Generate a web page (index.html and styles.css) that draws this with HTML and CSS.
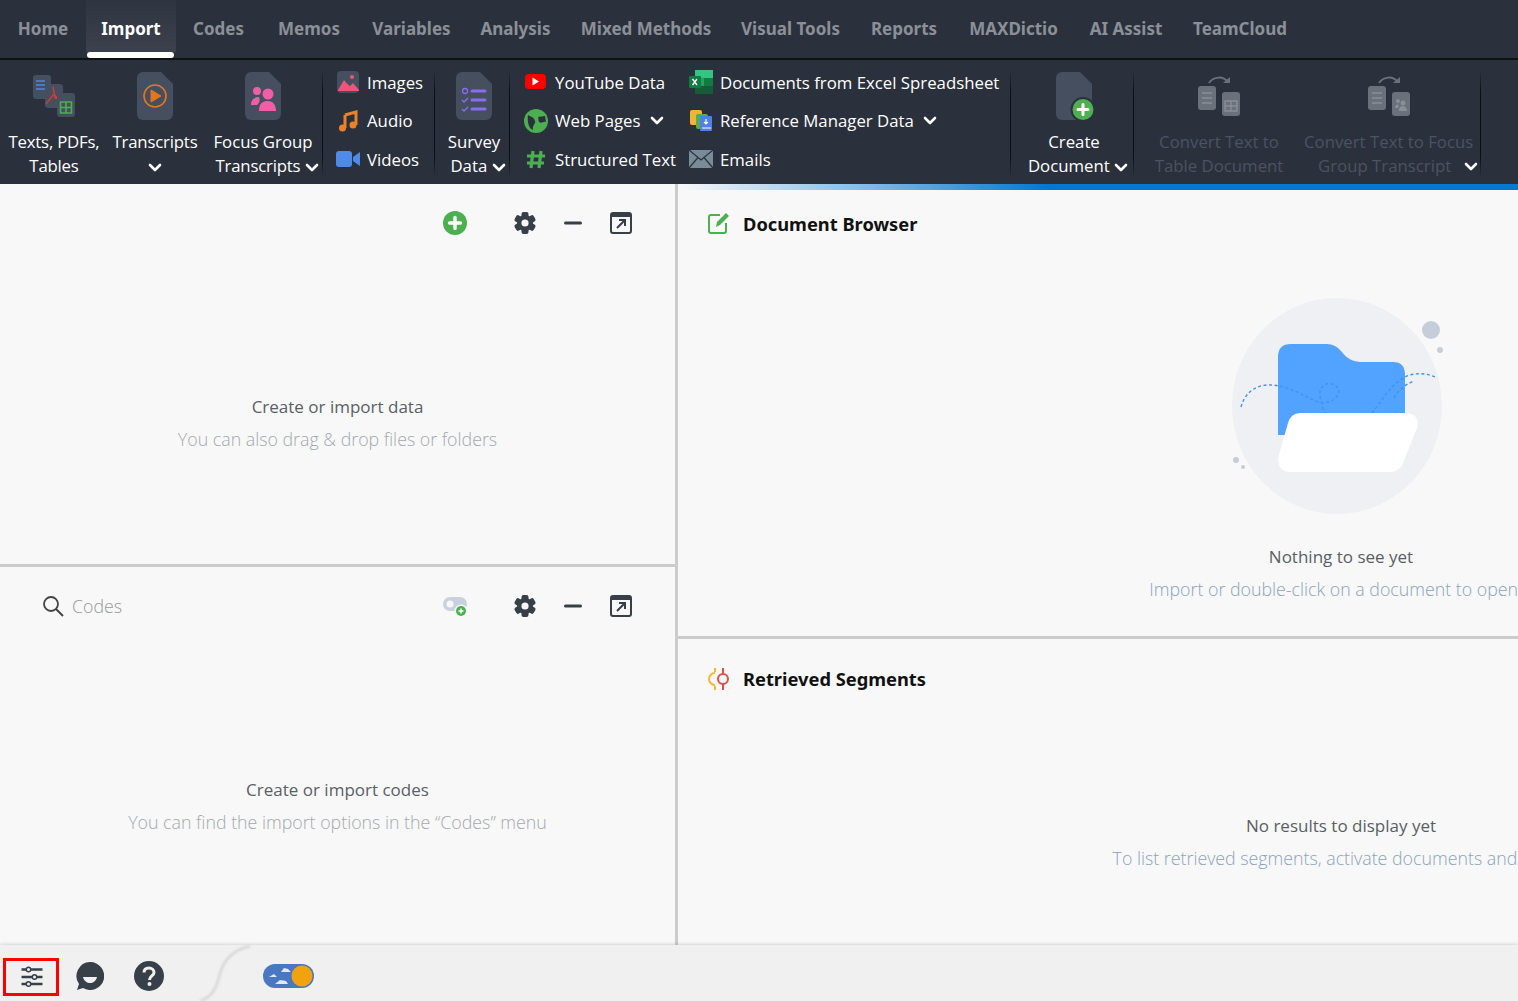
FILE: index.html
```html
<!DOCTYPE html>
<html lang="en">
<head>
    <meta charset="UTF-8">
    <title>Import</title>
    <link rel="stylesheet" href="styles.css">
</head>
<body>
    <svg class="defs" width="0" height="0">
        <symbol id="doc" viewBox="0 0 36 48"><path d="M6 0H24L36 12V42A6 6 0 0 1 30 48H6A6 6 0 0 1 0 42V6A6 6 0 0 1 6 0Z"/></symbol>
        <symbol id="chev" viewBox="0 0 14 9"><path d="M2 2L7 7L12 2" fill="none" stroke="currentColor" stroke-width="2.6" stroke-linecap="round" stroke-linejoin="round"/></symbol>
        <symbol id="gear" viewBox="0 0 24 24">
            <g fill="#373f49">
                <rect x="8.5" y="1" width="7" height="22" rx="2"/>
                <rect x="8.5" y="1" width="7" height="22" rx="2" transform="rotate(60 12 12)"/>
                <rect x="8.5" y="1" width="7" height="22" rx="2" transform="rotate(120 12 12)"/>
                <circle cx="12" cy="12" r="8"/>
            </g>
            <circle cx="12" cy="12" r="3.6" fill="#f8f8f8"/>
        </symbol>
        <symbol id="minus" viewBox="0 0 24 24"><rect x="3" y="10.5" width="18" height="3" rx="1.5" fill="#373f49"/></symbol>
        <symbol id="popout" viewBox="0 0 24 24">
            <rect x="2" y="2" width="20" height="20" rx="2" fill="none" stroke="#373f49" stroke-width="2"/>
            <rect x="2" y="2" width="20" height="4" fill="#373f49"/>
            <path d="M8 17L16 9M10 9H16V15" fill="none" stroke="#373f49" stroke-width="2"/>
        </symbol>
    </svg>

    <div class="app">
        <!-- tabs -->
        <nav class="tabs">
            <a class="tab t-home">Home</a>
            <a class="tab t-import active">Import</a>
            <a class="tab t-codes">Codes</a>
            <a class="tab t-memos">Memos</a>
            <a class="tab t-variables">Variables</a>
            <a class="tab t-analysis">Analysis</a>
            <a class="tab t-mixed">Mixed Methods</a>
            <a class="tab t-visual">Visual Tools</a>
            <a class="tab t-reports">Reports</a>
            <a class="tab t-maxdictio">MAXDictio</a>
            <a class="tab t-ai">AI Assist</a>
            <a class="tab t-cloud">TeamCloud</a>
        </nav>

        <!-- ribbon -->
        <div class="ribbon">
            <div class="big w-texts">
                <svg class="big-icon" width="44" height="44" viewBox="0 0 44 44">
                    <rect x="1" y="1" width="18" height="24" rx="3" fill="#454f60"/>
                    <path d="M4 7H13M4 11H13M4 15H13" stroke="#4f86e0" stroke-width="1.3"/>
                    <rect x="13" y="10" width="18" height="24" rx="3" fill="#454f60"/>
                    <path d="M21 13L23 24L30 26M14 30L22 20L27 27" fill="none" stroke="#d93a32" stroke-width="1.4"/>
                    <rect x="25" y="19" width="18" height="24" rx="3" fill="#454f60"/>
                    <path d="M28.5 28H39.5V39H28.5ZM28.5 33.500H39.500M34 28V39" fill="none" stroke="#4caf50" stroke-width="1.6"/>
                </svg>
                <div class="big-label tight">Texts, PDFs,<br>Tables</div>
            </div>
            <div class="big w-trans">
                <svg class="big-icon" width="36" height="48" viewBox="0 0 36 48">
                    <use href="#doc" width="36" height="48" fill="#454f60"/>
                    <circle cx="18" cy="24" r="11" fill="none" stroke="#e8751a" stroke-width="1.6"/>
                    <path d="M14 18L24 24L14 30Z" fill="#e8751a" stroke="#e8751a" stroke-linejoin="round"/>
                </svg>
                <div class="big-label tight">Transcripts<br><svg class="chev" width="14" height="9"><use href="#chev"/></svg></div>
            </div>
            <div class="big w-focus">
                <svg class="big-icon" width="36" height="48" viewBox="0 0 36 48">
                    <use href="#doc" width="36" height="48" fill="#454f60"/>
                    <g fill="#ee5fa7">
                        <circle cx="12" cy="19" r="4"/>
                        <circle cx="23" cy="22" r="5.500"/>
                        <path d="M6 33C6 27 10 25 14 25C15 28 15 30 12 33Z"/>
                        <path d="M14 39C14 31 18 29 23 29C28 29 31 33 31 39Z"/>
                    </g>
                </svg>
                <div class="big-label">Focus Group<br><span class="ln tight">Transcripts <svg class="chev" width="14" height="9"><use href="#chev"/></svg></span></div>
            </div>
            <div class="sep"></div>
            <div class="small-col w-media">
                <div class="small">
                    <svg class="small-icon" width="24" height="24" viewBox="0 0 24 24">
                        <rect x="1" y="1" width="22" height="22" rx="4" fill="#454f60"/>
                        <path d="M2 20L8 10C10 12 12 15 14 16L17 13L23 20V21H2Z" fill="#ee5577"/>
                        <circle cx="16" cy="7" r="2" fill="#ee5577"/>
                    </svg>Images
                </div>
                <div class="small">
                    <svg class="small-icon" width="24" height="24" viewBox="0 0 24 24">
                        <path d="M9 6L20 3V16" fill="none" stroke="#e8832a" stroke-width="3"/>
                        <path d="M9 6V19" stroke="#e8832a" stroke-width="3"/>
                        <circle cx="6.500" cy="19" r="3.500" fill="#e8832a"/>
                        <circle cx="17" cy="16" r="3.500" fill="#e8832a"/>
                    </svg>Audio
                </div>
                <div class="small">
                    <svg class="small-icon" width="24" height="24" viewBox="0 0 24 24">
                        <rect x="0" y="4" width="16" height="16" rx="3" fill="#4f8ae8"/>
                        <path d="M17 10L24 5V19L17 14Z" fill="#4f8ae8"/>
                    </svg>Videos
                </div>
            </div>
            <div class="sep"></div>
            <div class="big w-survey">
                <svg class="big-icon" width="36" height="48" viewBox="0 0 36 48">
                    <use href="#doc" width="36" height="48" fill="#454f60"/>
                    <circle cx="9" cy="19" r="2.500" fill="none" stroke="#8a6cf0" stroke-width="1.300"/>
                    <path d="M6 28L8 30L12 26M6 37L8 39L12 35" fill="none" stroke="#8a6cf0" stroke-width="1.300"/>
                    <path d="M16 19H29M16 28H29M16 37H29" stroke="#8a6cf0" stroke-width="3" stroke-linecap="round"/>
                </svg>
                <div class="big-label">Survey<br><span class="ln">Data <svg class="chev" width="14" height="9"><use href="#chev"/></svg></span></div>
            </div>
            <div class="sep"></div>
            <div class="small-col w-web">
                <div class="small">
                    <svg class="small-icon" width="24" height="24" viewBox="0 0 24 24">
                        <rect x="1" y="4" width="21" height="15" rx="4" fill="#f00"/>
                        <path d="M8.500 7.500L15 11.500L8.500 15.500Z" fill="#fff"/>
                    </svg>YouTube Data
                </div>
                <div class="small">
                    <svg class="small-icon" width="24" height="24" viewBox="0 0 24 24">
                        <circle cx="12" cy="12" r="12" fill="#4caf50"/>
                        <path d="M4 6C7 8 10 8 11 12C12 15 8 16 9 21C5 20 3 13 4 6ZM14 8L21 7L22 13C19 12 18 15 15 13C14 12 15 10 14 8Z" fill="#2b313c"/>
                    </svg>Web Pages <svg class="chev" width="14" height="9"><use href="#chev"/></svg>
                </div>
                <div class="small">
                    <svg class="small-icon" width="24" height="24" viewBox="0 0 24 24">
                        <path d="M9 4L7 21M17 4L15 21M3 9H21M3 16H20" fill="none" stroke="#4caf50" stroke-width="3.200"/>
                    </svg>Structured Text
                </div>
            </div>
            <div class="small-col w-docs">
                <div class="small">
                    <svg class="small-icon" width="24" height="24" viewBox="0 0 24 24">
                        <rect x="6" y="0" width="18" height="8" fill="#33c481"/>
                        <rect x="6" y="8" width="9" height="8" fill="#21a366"/>
                        <rect x="15" y="8" width="9" height="8" fill="#107c41"/>
                        <rect x="6" y="16" width="18" height="8" fill="#185c37"/>
                        <rect x="0" y="6" width="12" height="12" rx="1" fill="#107c41"/>
                        <path d="M3.500 9L8 15M8 9L3.500 15" stroke="#fff" stroke-width="1.400"/>
                    </svg>Documents from Excel Spreadsheet
                </div>
                <div class="small">
                    <svg class="small-icon" width="24" height="24" viewBox="0 0 24 24">
                        <rect x="1" y="1" width="12" height="15" rx="2" fill="#f5b041"/>
                        <rect x="7" y="5" width="12" height="15" rx="2" fill="#4caf50"/>
                        <rect x="11" y="7" width="12" height="15" rx="1" fill="#4f7fe8"/>
                        <path d="M17 10V15M15 13L17 15L19 13M13 19H22" fill="none" stroke="#fff" stroke-width="1.200"/>
                    </svg>Reference Manager Data <svg class="chev" width="14" height="9"><use href="#chev"/></svg>
                </div>
                <div class="small">
                    <svg class="small-icon" width="24" height="24" viewBox="0 0 24 24">
                        <rect x="0" y="3" width="24" height="18" rx="1" fill="#788b96"/>
                        <path d="M0 3L12 13L24 3M0 21L9 10.500M24 21L15 10.500" fill="none" stroke="#2b313c" stroke-width="1.200"/>
                    </svg>Emails
                </div>
            </div>
            <div class="sep"></div>
            <div class="big w-create">
                <svg class="big-icon create-icon" width="40" height="50" viewBox="0 0 40 50">
                    <use href="#doc" width="36" height="48" fill="#454f60"/>
                    <circle cx="27" cy="37.500" r="12.500" fill="#2b313c"/>
                    <circle cx="27" cy="37.500" r="10.500" fill="#4caf50"/>
                    <path d="M27 32.500V42.500M22 37.500H32" stroke="#fff" stroke-width="3" stroke-linecap="round"/>
                </svg>
                <div class="big-label">Create<br><span class="ln">Document <svg class="chev" width="14" height="9"><use href="#chev"/></svg></span></div>
            </div>
            <div class="sep"></div>
            <div class="big w-conv1 disabled">
                <svg class="conv-icon" width="44" height="44" viewBox="0 0 44 44">
                    <path d="M12 7C17 0 26 0 31 6" fill="none" stroke="#6b717b" stroke-width="2"/>
                    <path d="M26 7H33V1Z" fill="#6b717b"/>
                    <rect x="1" y="10" width="18" height="24" rx="3" fill="#6b717b"/>
                    <path d="M5 17H15M5 22H15M5 27H15" stroke="#8a8f97" stroke-width="1.300"/>
                    <rect x="25" y="16" width="18" height="24" rx="3" fill="#6b717b"/>
                    <path d="M28 25H40V35H28ZM28 30H40M34 25V35" fill="none" stroke="#8a8f97" stroke-width="1.300"/>
                </svg>
                <div class="big-label">Convert Text to<br>Table Document</div>
            </div>
            <div class="big w-conv2 disabled">
                <svg class="conv-icon" width="44" height="44" viewBox="0 0 44 44">
                    <path d="M12 7C17 0 26 0 31 6" fill="none" stroke="#6b717b" stroke-width="2"/>
                    <path d="M26 7H33V1Z" fill="#6b717b"/>
                    <rect x="1" y="10" width="18" height="24" rx="3" fill="#6b717b"/>
                    <path d="M5 17H15M5 22H15M5 27H15" stroke="#8a8f97" stroke-width="1.300"/>
                    <rect x="25" y="16" width="18" height="24" rx="3" fill="#6b717b"/>
                    <circle cx="31" cy="25" r="2" fill="#8a8f97"/>
                    <circle cx="36" cy="27" r="2.500" fill="#8a8f97"/>
                    <path d="M28 32C28 29 30 28 32 29L31 32ZM32 35C32 31 34 30 36 30C38 30 40 32 40 35Z" fill="#8a8f97"/>
                </svg>
                <div class="big-label">Convert Text to Focus</div>
                <div class="big-label conv-last"><span>Group Transcript</span><svg class="chev" width="14" height="9"><use href="#chev"/></svg></div>
            </div>
            <div class="sep"></div>
        </div>

        <div class="main">
            <!-- left column -->
            <div class="left">
                <section class="pane pane-top">
                    <div class="toolbar">
                        <svg class="tool add" width="24" height="24" viewBox="0 0 24 24">
                            <circle cx="12" cy="12" r="12" fill="#4caf50"/>
                            <path d="M12 6.500V17.500M6.500 12H17.500" stroke="#fff" stroke-width="3.400" stroke-linecap="round"/>
                        </svg>
                        <svg class="tool" width="24" height="24"><use href="#gear"/></svg>
                        <svg class="tool" width="24" height="24"><use href="#minus"/></svg>
                        <svg class="tool" width="24" height="24"><use href="#popout"/></svg>
                    </div>
                    <div class="message">
                        <p class="msg-title">Create or import data</p>
                        <p class="msg-sub">You can also drag &amp; drop files or folders</p>
                    </div>
                </section>
                <section class="pane">
                    <div class="toolbar">
                        <div class="search">
                            <svg width="22" height="22" viewBox="0 0 22 22">
                                <circle cx="9" cy="9" r="7" fill="none" stroke="#444" stroke-width="1.800"/>
                                <path d="M14 14L21 21" stroke="#444" stroke-width="2"/>
                            </svg>
                            <span>Codes</span>
                        </div>
                        <svg class="tool add" width="24" height="24" viewBox="0 0 24 24">
                            <rect x="0" y="3" width="24" height="14" rx="7" fill="#c9d1de"/>
                            <circle cx="7" cy="10" r="3.500" fill="#f8f8f8"/>
                            <circle cx="18" cy="17" r="6.500" fill="#f8f8f8"/>
                            <circle cx="18" cy="17" r="5" fill="#4caf50"/>
                            <path d="M18 14.500V19.500M15.500 17H20.500" stroke="#fff" stroke-width="1.500"/>
                        </svg>
                        <svg class="tool" width="24" height="24"><use href="#gear"/></svg>
                        <svg class="tool" width="24" height="24"><use href="#minus"/></svg>
                        <svg class="tool" width="24" height="24"><use href="#popout"/></svg>
                    </div>
                    <div class="message">
                        <p class="msg-title">Create or import codes</p>
                        <p class="msg-sub">You can find the import options in the “Codes” menu</p>
                    </div>
                </section>
            </div>

            <!-- right column, wider than the window -->
            <div class="right">
                <div class="progress"></div>
                <section class="doc-browser">
                    <h3 class="pane-title">
                        <svg width="22" height="22" viewBox="0 0 22 22">
                            <path d="M12 3H3A2 2 0 0 0 1 5V19A2 2 0 0 0 3 21H16A2 2 0 0 0 18 19V11" fill="none" stroke="#4caf50" stroke-width="2"/>
                            <path d="M8 15L9 10L18 1L21 4L12 13Z" fill="#4caf50"/>
                        </svg>
                        Document Browser
                    </h3>
                    <svg class="empty-art" width="250" height="240" viewBox="0 0 250 240">
                        <ellipse cx="127" cy="121" rx="105" ry="108" fill="#eef0f4"/>
                        <circle cx="221" cy="45" r="9" fill="#c5cddb"/>
                        <circle cx="230" cy="65" r="3" fill="#c5cddb"/>
                        <circle cx="26" cy="175" r="3" fill="#c5cddb"/>
                        <circle cx="33" cy="182" r="2" fill="#c5cddb"/>
                        <path d="M68 72Q68 59 81 59H117Q125 59 131 66Q139 77 150 77H183Q195 77 195 90V150H68Z" fill="#52a3ff"/>
                        <g fill="none" stroke="#3d93f0" stroke-width="1.400" stroke-dasharray="3 2.500">
                            <path d="M31 122C36 104 50 99 62 100C82 102 95 112 108 117C120 120 132 112 128 103C122 95 108 98 110 112C111 118 113 123 115 128"/>
                            <path d="M162 128C172 116 180 100 195 92C205 87 218 88 227 93"/>
                            <path d="M184 113C188 106 194 100 204 96"/>
                        </g>
                        <path d="M90 128H195Q210 128 207 143L193 178Q190 187 180 187H80Q68 187 68 173L78 138Q81 128 90 128Z" fill="#fff"/>
                    </svg>
                    <div class="message art-msg">
                        <p class="msg-title">Nothing to see yet</p>
                        <p class="msg-sub blue">Import or double-click on a document to open it</p>
                    </div>
                </section>
                <section class="retrieved">
                    <h3 class="pane-title">
                        <svg width="22" height="24" viewBox="0 0 22 24">
                            <path d="M7 1V5M7 19V23" stroke="#f7b733" stroke-width="2"/>
                            <path d="M7 6A6 6 0 0 0 7 18" fill="none" stroke="#f7b733" stroke-width="2"/>
                            <circle cx="15" cy="12" r="5" fill="none" stroke="#e0504a" stroke-width="2"/>
                            <path d="M15 1V7M15 17V23" stroke="#e0504a" stroke-width="2"/>
                        </svg>
                        Retrieved Segments
                    </h3>
                    <div class="message seg-msg">
                        <p class="msg-title">No results to display yet</p>
                        <p class="msg-sub blue">To list retrieved segments, activate documents and codes</p>
                    </div>
                </section>
            </div>
        </div>

        <!-- status bar -->
        <footer class="statusbar">
            <svg class="curve" width="60" height="56" viewBox="0 0 60 56">
                <path d="M2 56C14 52 18 44 21 32C24 20 30 6 52 1" fill="none" stroke="#d6d6d6" stroke-width="2.500"/>
            </svg>
            <div class="settings">
                <svg width="24" height="24" viewBox="0 0 24 24">
                    <path d="M1.500 4.500H22.500M1.500 12H22.500M1.500 19H22.500" stroke="#373f49" stroke-width="2.600"/>
                    <circle cx="8.500" cy="4.500" r="2.200" fill="#f0f0f0" stroke="#373f49" stroke-width="1.400"/>
                    <circle cx="14.500" cy="12" r="2.200" fill="#f0f0f0" stroke="#373f49" stroke-width="1.400"/>
                    <circle cx="8.500" cy="19" r="2.200" fill="#f0f0f0" stroke="#373f49" stroke-width="1.400"/>
                </svg>
            </div>
            <svg class="foot-icon chat" width="28" height="28" viewBox="0 0 28 28">
                <path d="M14 0A14 14 0 1 1 7 26L1 28L3 22A14 14 0 0 1 14 0Z" fill="#373f49"/>
                <path d="M7 15H21C20 19 17 21 14 21C11 21 8 19 7 15Z" fill="#f0f0f0"/>
            </svg>
            <svg class="foot-icon help" width="30" height="30" viewBox="0 0 30 30">
                <circle cx="15" cy="15" r="15" fill="#373f49"/>
                <path d="M10 11.500C10 8.500 12 7 15 7C18 7 20 9 20 11.500C20 15 15.500 15 15.500 19" fill="none" stroke="#f0f0f0" stroke-width="3"/>
                <circle cx="15.500" cy="23" r="2" fill="#f0f0f0"/>
            </svg>
            <svg class="foot-icon toggle" width="51" height="24" viewBox="0 0 51 24">
                <rect x="0" y="0" width="51" height="24" rx="12" fill="#4a78c0"/>
                <path d="M18 8L21 4L25 5L28 8ZM6 13L11 10L14 13ZM12 20L17 16L23 17L25 20Z" fill="#dfe8f5"/>
                <circle cx="39" cy="12" r="10.500" fill="#f2a20e"/>
            </svg>
        </footer>
    </div>
</body>
</html>
```

FILE: styles.css
```css
* {
    box-sizing: border-box;
}
html, body {
    margin: 0;
    height: 100%;
    overflow: hidden;
}
body {
    font-family: "Open Sans", "Noto Sans", sans-serif;
    background-color: #f8f8f8;
}
p, h3 {
    margin: 0;
}
.defs {
    position: absolute;
}
.app {
    height: 1001px;
    display: flex;
    flex-direction: column;
}

/* tabs */
.tabs {
    height: 60px;
    display: flex;
    background-color: #2b313c;
    border-bottom: 2px solid #111;
}
.tab {
    height: 58px;
    display: flex;
    align-items: center;
    justify-content: center;
    padding-bottom: 2px;
    font-family: "Noto Sans", sans-serif;
    font-size: 17px;
    font-weight: 700;
    color: #8b9098;
    white-space: nowrap;
}
.t-home { width: 86px; }
.t-import { width: 90px; }
.t-codes { width: 85px; }
.t-memos { width: 96px; }
.t-variables { width: 109px; }
.t-analysis { width: 99px; }
.t-mixed { width: 162px; }
.t-visual { width: 127px; }
.t-reports { width: 100px; }
.t-maxdictio { width: 119px; }
.t-ai { width: 106px; }
.t-cloud { width: 122px; }
.tab.active {
    position: relative;
    color: #fff;
    background: linear-gradient(to bottom, #2f3540, #3c414d) no-repeat;
    background-size: 100% 52px;
}
.tab.active::after {
    content: "";
    position: absolute;
    left: 1px;
    right: 2px;
    bottom: 0;
    height: 6px;
    border-radius: 3px;
    background-color: #fff;
}

/* ribbon */
.ribbon {
    height: 124px;
    display: flex;
    background-color: #2b313c;
    color: #fff;
    font-size: 16.800px;
}
.sep {
    width: 1px;
    margin: 10px 0 6px;
    background: linear-gradient(to bottom, transparent, #0c0e12 20%, #0c0e12 80%, transparent);
}
.big {
    height: 124px;
    padding-top: 12px;
    text-align: center;
    flex-shrink: 0;
}
.big-icon {
    display: block;
    margin: 0 auto 10px;
    height: 48px;
}
.conv-icon {
    display: block;
    margin: 4px auto 10px;
    height: 44px;
}
.create-icon {
    height: 50px;
    margin-bottom: 8px;
    transform: translateX(2px);
}
.big-label {
    line-height: 24px;
    white-space: nowrap;
}
.tight {
    letter-spacing: -0.2px;
}
.chev {
    color: #fff;
    vertical-align: 0;
    flex-shrink: 0;
}
.ln {
    display: inline-block;
    margin-left: 8px;
}
.w-texts { width: 108px; }
.w-trans { width: 94px; }
.w-focus { width: 120px; padding-left: 2px; }
.w-survey { width: 74px; padding-left: 4px; }
.w-create { width: 122px; padding-left: 4px; }
.w-conv1 { width: 170px; }
.w-conv2 { width: 176px; padding-right: 7px; }
.disabled {
    color: #4c5361;
}
.conv-last {
    display: flex;
    padding-left: 14px;
}
.conv-last .chev {
    margin: 8px 0 0 13px;
}
.small-col {
    padding-top: 3px;
    flex-shrink: 0;
}
.small {
    height: 38.500px;
    display: flex;
    align-items: center;
    white-space: nowrap;
}
.small .chev {
    margin-left: 9px;
}
.small-icon {
    margin-right: 7px;
    flex-shrink: 0;
}
.w-media {
    width: 111px;
    padding-left: 13px;
}
.w-web {
    width: 169px;
    padding-left: 14px;
}
.w-docs {
    width: 331px;
    padding-left: 10px;
}

/* panes */
.main {
    height: 761px;
    display: flex;
    overflow: hidden;
}
.left {
    width: 678px;
    flex-shrink: 0;
    border-right: 3px solid #ccc;
}
.pane-top {
    height: 383px;
    border-bottom: 3px solid #ccc;
}
.toolbar {
    display: flex;
    justify-content: flex-end;
    gap: 24px;
    padding: 27px 42px 0;
}
.tool {
    display: block;
}
.tool.add {
    margin-right: 22px;
}
.search {
    display: flex;
    align-items: center;
    gap: 8px;
    margin-right: auto;
    font-size: 17.800px;
    font-weight: 300;
    color: #999;
}
.message {
    text-align: center;
    margin-top: 155px;
    white-space: nowrap;
}
.msg-title {
    line-height: 33px;
    font-size: 17px;
    color: #5a5f66;
}
.msg-sub {
    line-height: 33px;
    font-size: 17.800px;
    font-weight: 300;
    color: #a3a8b0;
}
.msg-sub.blue {
    color: #8ba3bd;
}
.right {
    width: 1326px;
    flex-shrink: 0;
}
.progress {
    height: 6px;
    background: linear-gradient(to right, #f8f8f8 0, #8fc1e8 170px, #0078d4 370px);
}
.doc-browser {
    height: 449px;
    border-bottom: 3px solid #ccc;
}
.pane-title {
    display: flex;
    align-items: center;
    gap: 13px;
    padding: 8px 0 0 30px;
    height: 58px;
    font-family: "Noto Sans", sans-serif;
    font-size: 18.300px;
    font-weight: 700;
    color: #111;
}
.retrieved .pane-title {
    padding-top: 21px;
}
.empty-art {
    display: block;
    margin: 37px auto 0;
    transform: translateX(-6px);
}
.art-msg {
    margin-top: 15px;
}
.seg-msg {
    margin-top: 112px;
}

/* status bar */
.statusbar {
    position: relative;
    height: 56px;
    display: flex;
    align-items: center;
    padding-top: 6px;
    background-color: #f0f0f0;
    box-shadow: 0 -1px 3px rgba(0, 0, 0, 0.15);
}
.curve {
    position: absolute;
    left: 198px;
    top: 0;
    filter: blur(1px);
}
.settings {
    width: 56px;
    height: 38px;
    margin: 2px 0 0 3px;
    padding-left: 2px;
    display: flex;
    align-items: center;
    justify-content: center;
    border: 3px solid #f00;
}
.chat {
    margin-left: 17px;
}
.help {
    margin-left: 30px;
}
.toggle {
    margin-left: 99px;
}
```
